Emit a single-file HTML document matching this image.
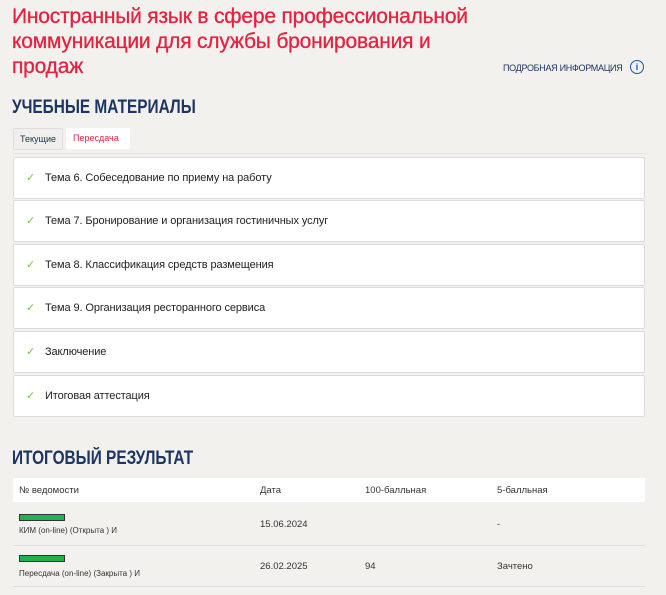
<!DOCTYPE html>
<html><head><meta charset="utf-8"><style>
body{margin:0;background:#f2f1ee;font-family:"Liberation Sans",sans-serif;width:666px;height:595px;overflow:hidden;position:relative}
.abs{position:absolute}
h1{position:absolute;left:12px;top:4px;margin:0;font-size:21px;line-height:25px;color:#e8203f;font-weight:normal;letter-spacing:-0.2px;width:480px;-webkit-text-stroke:0.3px #e8203f}
.sec{position:absolute;left:12px;margin:0;font-weight:bold;color:#1c3561;font-size:19px;transform:scaleX(0.81);transform-origin:left;white-space:nowrap}
.item{position:absolute;left:13px;width:630px;height:40px;background:#fff;border:1px solid #dcdcdc;border-radius:2px;font-size:11px;color:#222;line-height:40px;letter-spacing:-0.1px}
.item span.c{position:absolute;left:12px;color:#7cc242;font-size:11px}
.item span.t{position:absolute;left:31px}
.row{position:absolute;left:13px;width:632px;font-size:9.5px;color:#333}
.bar{position:absolute;left:6px;width:44px;height:5px;background:#22b14c;border:1px solid #333}
</style></head><body>
<h1>Иностранный язык в сфере профессиональной коммуникации для службы бронирования и продаж</h1>
<div class="abs" style="left:503px;top:63px;font-size:9px;color:#1c3561;letter-spacing:-0.3px">ПОДРОБНАЯ ИНФОРМАЦИЯ</div>
<div class="abs" style="left:630px;top:60px;width:12px;height:12px;border:1.5px solid #1c5aa0;border-radius:50%;color:#1c5aa0;font-size:9px;text-align:center;line-height:12px;font-weight:bold">i</div>
<div class="sec" style="top:97px">УЧЕБНЫЕ МАТЕРИАЛЫ</div>
<div class="abs" style="left:13px;top:128px;width:36px;height:20px;border:1px solid #ddd;border-radius:2px;font-size:9px;color:#1c3561;line-height:20px;padding:0 6px;background:#f0efec">Текущие</div>
<div class="abs" style="left:66px;top:128px;width:50px;height:21px;border-radius:2px;font-size:9px;color:#e8203f;line-height:21px;padding:0 7px;background:#fff">Пересдача</div>
<div class="abs" style="left:13px;top:153px;width:632px;height:1px;background:#e2e2e2"></div>
<div class="item" style="top:157px"><span class="c">✓</span><span class="t">Тема 6. Собеседование по приему на работу</span></div>
<div class="item" style="top:200px"><span class="c">✓</span><span class="t">Тема 7. Бронирование и организация гостиничных услуг</span></div>
<div class="item" style="top:244px"><span class="c">✓</span><span class="t">Тема 8. Классификация средств размещения</span></div>
<div class="item" style="top:287px"><span class="c">✓</span><span class="t">Тема 9. Организация ресторанного сервиса</span></div>
<div class="item" style="top:331px"><span class="c">✓</span><span class="t">Заключение</span></div>
<div class="item" style="top:375px"><span class="c">✓</span><span class="t">Итоговая аттестация</span></div>
<div class="sec" style="top:448px">ИТОГОВЫЙ РЕЗУЛЬТАТ</div>
<div class="row" style="top:478px;height:24px;background:#fff;line-height:25px">
<span class="abs" style="left:6px">№ ведомости</span><span class="abs" style="left:247px">Дата</span><span class="abs" style="left:352px">100-балльная</span><span class="abs" style="left:484px">5-балльная</span></div>
<div class="row" style="top:502px;height:43px;border-bottom:1px solid #ddd">
<div class="bar" style="top:12px"></div><span class="abs" style="left:6px;top:24px;font-size:8px">КИМ (on-line) (Открыта ) И</span>
<span class="abs" style="left:247px;top:17px">15.06.2024</span><span class="abs" style="left:484px;top:17px">-</span></div>
<div class="row" style="top:546px;height:40px;border-bottom:1px solid #ddd">
<div class="bar" style="top:9px"></div><span class="abs" style="left:6px;top:23px;font-size:8px">Пересдача (on-line) (Закрыта ) И</span>
<span class="abs" style="left:247px;top:15px">26.02.2025</span><span class="abs" style="left:352px;top:15px">94</span><span class="abs" style="left:484px;top:15px">Зачтено</span></div>
</body></html>
